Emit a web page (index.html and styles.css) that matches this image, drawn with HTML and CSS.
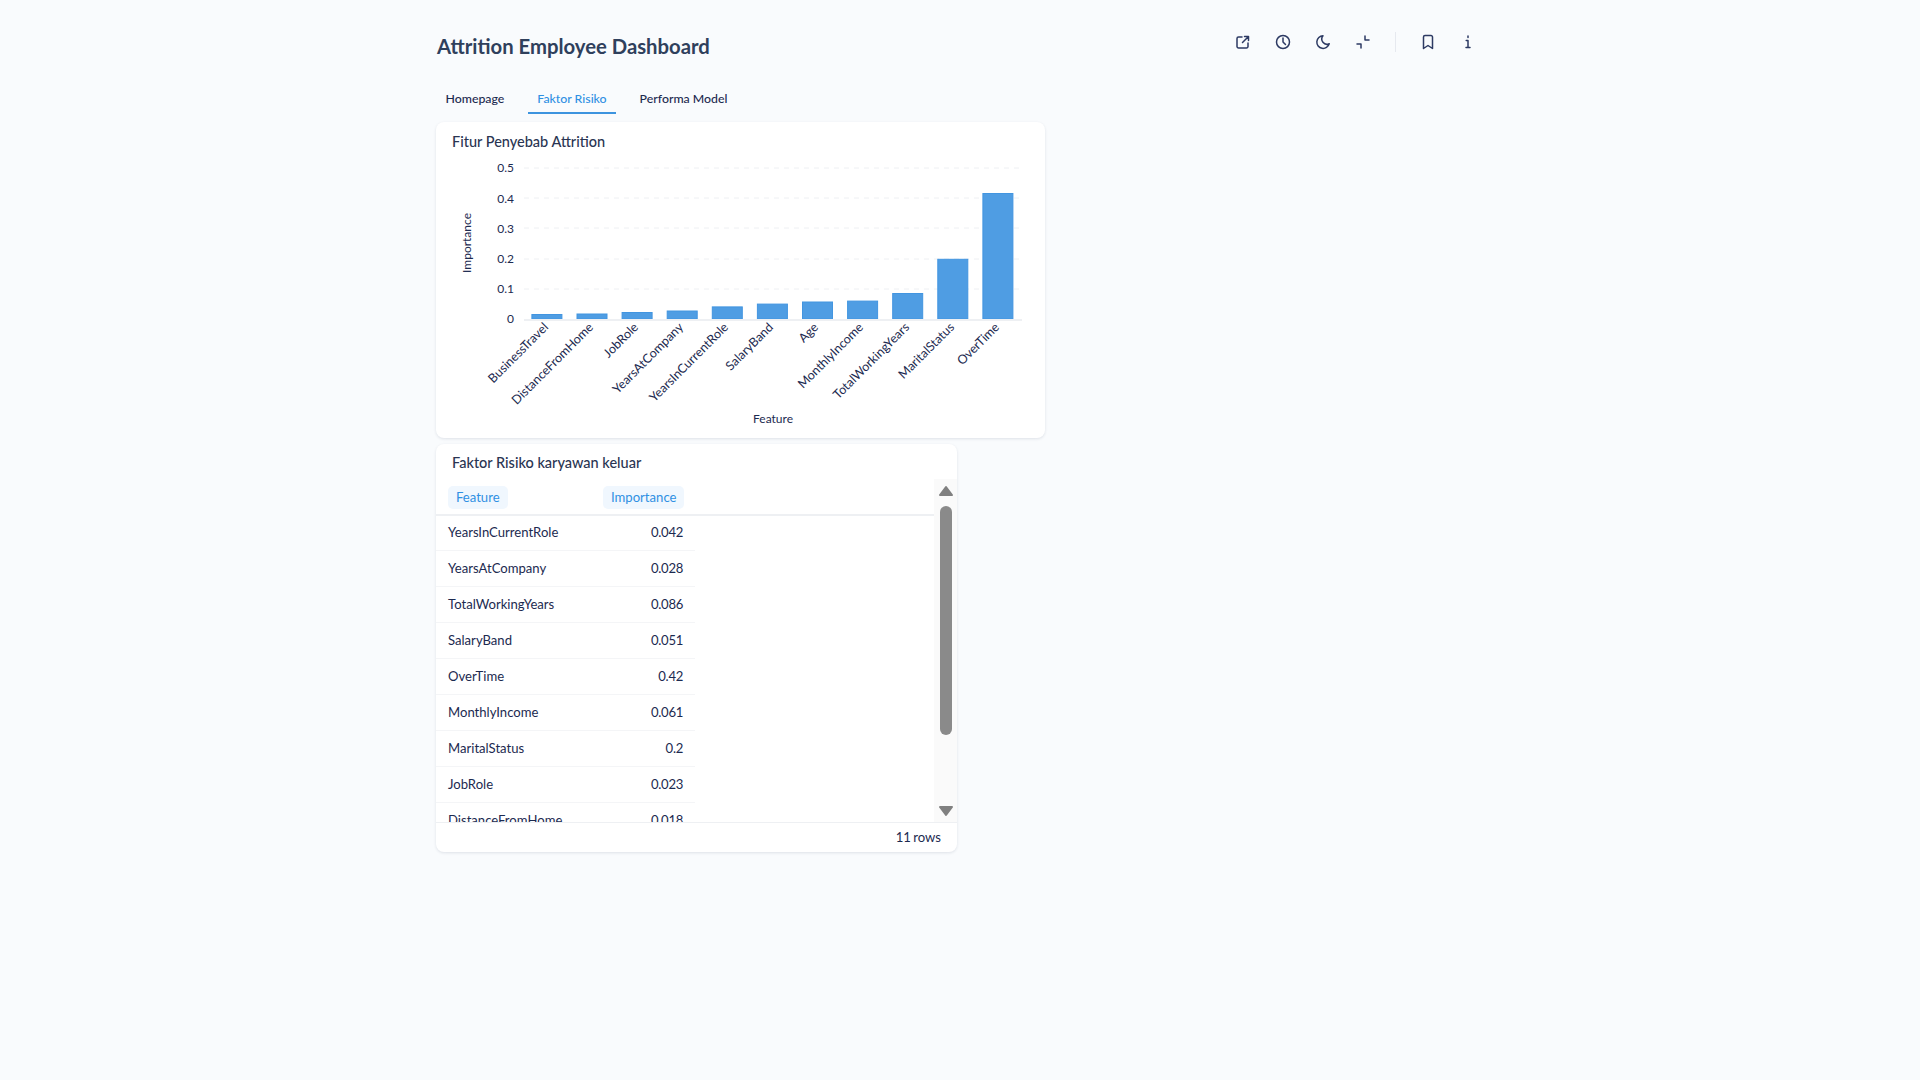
FILE: index.html
```html
<!DOCTYPE html>
<html lang="en">
<head>
  <meta charset="UTF-8" />
  <title>Attrition Employee Dashboard</title>
  <link rel="stylesheet" href="styles.css">
</head>
<body>
  <div class="container">
    <header class="topbar">
      <h1>Attrition Employee Dashboard</h1>
      <div class="actions">
        <svg class="icon" viewBox="0 0 16 16"><path d="M7 3H3.500A1.500 1.500 0 0 0 2 4.500v8A1.500 1.500 0 0 0 3.500 14h8a1.500 1.500 0 0 0 1.500-1.500V9"/><path d="M7.500 8.500 13.500 2.500M9.500 2.500h4v4"/></svg>
        <svg class="icon" viewBox="0 0 16 16"><circle cx="8" cy="8" r="6.500"/><path d="M8 4v4l2.500 2.500"/></svg>
        <svg class="icon" viewBox="0 0 16 16"><path d="M8 1.800a6.300 6.300 0 1 0 6.200 8A5.200 5.200 0 0 1 8 1.800z"/></svg>
        <svg class="icon" viewBox="0 0 16 16"><path d="M10 2v4h4M2 10h4v4"/></svg>
        <span class="divider"></span>
        <svg class="icon" viewBox="0 0 16 16"><path d="M3.500 14.500V3a1.500 1.500 0 0 1 1.500-1.500h6A1.500 1.500 0 0 1 12.500 3v11.500L8 11.500z"/></svg>
        <svg class="icon" viewBox="0 0 16 16"><path d="M8 2v1.500M6.200 6.500H8v7M6 13.500h4"/></svg>
      </div>
    </header>

    <nav class="tabs">
      <a class="tab">Homepage</a>
      <a class="tab active">Faktor Risiko</a>
      <a class="tab">Performa Model</a>
    </nav>

    <!-- chart card -->
    <section class="card chart-card">
      <h2 class="card-title">Fitur Penyebab Attrition</h2>
      <svg class="chart" width="609" height="286" viewBox="0 0 609 286">
        <g class="grid">
          <line x1="88" x2="586" y1="16" y2="16"/>
          <line x1="88" x2="586" y1="46" y2="46"/>
          <line x1="88" x2="586" y1="76" y2="76"/>
          <line x1="88" x2="586" y1="107" y2="107"/>
          <line x1="88" x2="586" y1="137" y2="137"/>
        </g>
        <g class="ticks">
          <text x="78" y="20">0.5</text>
          <text x="78" y="50.500">0.4</text>
          <text x="78" y="80.500">0.3</text>
          <text x="78" y="111">0.2</text>
          <text x="78" y="141">0.1</text>
          <text x="78" y="171">0</text>
        </g>
        <g class="bars">
          <rect x="95.900" y="162.500" width="30" height="4.500"/>
          <rect x="141" y="162" width="30" height="5"/>
          <rect x="186.100" y="160.500" width="30" height="6.500"/>
          <rect x="231.200" y="159" width="30" height="8"/>
          <rect x="276.300" y="154.900" width="30" height="12.100"/>
          <rect x="321.400" y="152.100" width="30" height="14.900"/>
          <rect x="366.500" y="150" width="30" height="17"/>
          <rect x="411.600" y="149.100" width="30" height="17.900"/>
          <rect x="456.700" y="141.500" width="30" height="25.500"/>
          <rect x="501.800" y="107.300" width="30" height="59.700"/>
          <rect x="546.900" y="41.500" width="30" height="125.500"/>
        </g>
        <line class="axis" x1="88" x2="586" y1="168" y2="168"/>
        <g class="labels">
          <text transform="translate(113 176) rotate(-45)">BusinessTravel</text>
          <text transform="translate(158 176) rotate(-45)">DistanceFromHome</text>
          <text transform="translate(203 176) rotate(-45)">JobRole</text>
          <text transform="translate(248 176) rotate(-45)">YearsAtCompany</text>
          <text transform="translate(293 176) rotate(-45)">YearsInCurrentRole</text>
          <text transform="translate(338 176) rotate(-45)">SalaryBand</text>
          <text transform="translate(383 176) rotate(-45)">Age</text>
          <text transform="translate(428 176) rotate(-45)">MonthlyIncome</text>
          <text transform="translate(474 176) rotate(-45)">TotalWorkingYears</text>
          <text transform="translate(519 176) rotate(-45)">MaritalStatus</text>
          <text transform="translate(564 176) rotate(-45)">OverTime</text>
        </g>
        <text class="axis-title" x="337" y="271" text-anchor="middle">Feature</text>
        <text class="axis-title" transform="translate(35 91) rotate(-90)" text-anchor="middle">Importance</text>
      </svg>
    </section>

    <!-- table card -->
    <section class="card table-card">
      <h2 class="card-title">Faktor Risiko karyawan keluar</h2>
      <div class="table-wrap">
        <div class="table-scroll">
          <div class="thead">
            <div class="col-name"><span class="badge">Feature</span></div>
            <div class="col-value"><span class="badge">Importance</span></div>
          </div>
          <div class="row"><div class="col-name">YearsInCurrentRole</div><div class="col-value">0.042</div></div>
          <div class="row"><div class="col-name">YearsAtCompany</div><div class="col-value">0.028</div></div>
          <div class="row"><div class="col-name">TotalWorkingYears</div><div class="col-value">0.086</div></div>
          <div class="row"><div class="col-name">SalaryBand</div><div class="col-value">0.051</div></div>
          <div class="row"><div class="col-name">OverTime</div><div class="col-value">0.42</div></div>
          <div class="row"><div class="col-name">MonthlyIncome</div><div class="col-value">0.061</div></div>
          <div class="row"><div class="col-name">MaritalStatus</div><div class="col-value">0.2</div></div>
          <div class="row"><div class="col-name">JobRole</div><div class="col-value">0.023</div></div>
          <div class="row"><div class="col-name">DistanceFromHome</div><div class="col-value">0.018</div></div>
          <div class="row"><div class="col-name">BusinessTravel</div><div class="col-value">0.016</div></div>
          <div class="row"><div class="col-name">Age</div><div class="col-value">0.058</div></div>
        </div>
        <div class="scrollbar">
          <svg class="arrow arrow-up" viewBox="0 0 16 12"><path d="M8 2 14 10H2z"/></svg>
          <span class="thumb"></span>
          <svg class="arrow arrow-down" viewBox="0 0 16 12"><path d="M2 2H14L8 10z"/></svg>
        </div>
      </div>
      <footer class="table-footer">11 rows</footer>
    </section>
  </div>
</body>
</html>
```

FILE: styles.css
```css
* {
  box-sizing: border-box;
}

body {
  margin: 0;
  min-height: 1080px;
  background: #f9fbfd;
  color: #1c2a50;
  font-family: Lato, "Open Sans", sans-serif;
}

.container {
  width: 1048px;
  margin: 0 auto;
}

.topbar {
  display: flex;
  justify-content: space-between;
  align-items: flex-start;
  height: 82px;
  padding: 30px 0 0 1px;
}

h1 {
  margin: 0;
  font-size: 20.300px;
  line-height: 32px;
  font-weight: 700;
  color: #2f405c;
}

.actions {
  display: flex;
  align-items: center;
  gap: 24px;
  padding: 3px 8px 0 0;
  height: 21px;
}

.icon {
  width: 16px;
  height: 16px;
  fill: none;
  stroke: #2d3a63;
  stroke-width: 1.5;
  stroke-linecap: round;
  stroke-linejoin: round;
}

.divider {
  width: 1px;
  height: 20px;
  background: #e6e9ef;
}

.tabs {
  display: flex;
  gap: 14px;
  height: 32px;
  margin-bottom: 8px;
}

.tab {
  padding: 0 9.500px;
  height: 32px;
  line-height: 34px;
  font-size: 12.300px;
  font-weight: 500;
  color: #1c2a50;
}

.tab.active {
  color: #2f90e3;
  border-bottom: 2px solid #3d94df;
}

.card {
  background: #fff;
  border-radius: 8px;
  box-shadow: 0 1px 3px rgba(30, 50, 80, 0.12);
}

.card-title {
  margin: 0;
  padding: 10px 16px 0;
  font-size: 14.500px;
  line-height: 20px;
  font-weight: 500;
  color: #2a3552;
}

.chart-card {
  width: 609px;
  height: 316px;
  margin-bottom: 6px;
}

.chart {
  display: block;
}

.chart text {
  font-family: Lato, sans-serif;
  fill: #1c2a50;
}

.grid line {
  stroke: #eef0f3;
  stroke-dasharray: 5 5;
}

.axis {
  stroke: #eef0f3;
  stroke-width: 2;
}

.ticks text {
  font-size: 12px;
  text-anchor: end;
}

.bars rect {
  fill: #4f9de3;
  stroke: #4295e0;
  stroke-width: 1;
}

.labels text {
  font-size: 12.500px;
  text-anchor: end;
}

.axis-title {
  font-size: 12px;
}

.table-card {
  width: 521px;
  height: 408px;
  display: flex;
  flex-direction: column;
}

.table-card .card-title {
  height: 35px;
  flex: none;
  padding-top: 9px;
}

.table-wrap {
  display: flex;
  height: 343px;
  overflow: hidden;
}

.table-scroll {
  flex: 1;
  overflow: hidden;
}

.thead,
.row {
  display: flex;
  align-items: center;
  font-size: 13.100px;
}

.thead {
  height: 37px;
  padding-top: 1px;
  border-bottom: 2px solid #eef0f3;
}

.row {
  width: 259px;
  height: 36px;
  padding-bottom: 2px;
  border-bottom: 1px solid #f4f5f7;
}

.thead + .row {
  height: 35px;
}

.row .col-value {
  letter-spacing: -0.3px;
}

.col-name {
  width: 167px;
  padding-left: 12px;
}

.col-value {
  width: 80px;
  text-align: right;
}

.badge {
  display: inline-block;
  height: 23px;
  padding: 0 8px;
  line-height: 23px;
  border-radius: 5px;
  background: #f0f7fe;
  color: #2f90e3;
}

.scrollbar {
  position: relative;
  flex: none;
  width: 23px;
  background: #fafafa;
}

.thumb {
  position: absolute;
  left: 6px;
  top: 27px;
  width: 12px;
  height: 229px;
  border-radius: 6px;
  background: #8a8a8a;
}

.arrow {
  position: absolute;
  left: 4px;
  width: 16px;
  height: 12px;
  fill: #808080;
  stroke: #808080;
  stroke-width: 2;
  stroke-linejoin: round;
}

.arrow-up {
  top: 6px;
}

.arrow-down {
  top: 326px;
}

.table-footer {
  height: 30px;
  padding-right: 16px;
  border-top: 1px solid #eef0f3;
  text-align: right;
  font-size: 13.100px;
  line-height: 29px;
  word-spacing: -1px;
}
```
